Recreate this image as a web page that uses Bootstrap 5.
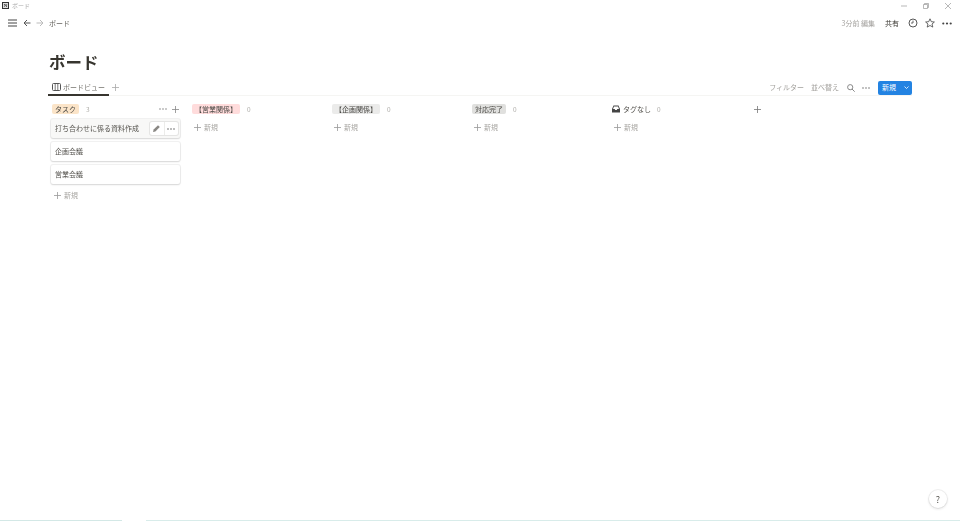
<!DOCTYPE html>
<html lang="ja"><head><meta charset="utf-8"><title>ボード</title>
<link href="https://cdn.jsdelivr.net/npm/bootstrap@5.3.0/dist/css/bootstrap.min.css" rel="stylesheet">
<style>
html,body{height:100%;overflow:hidden}
body{width:960px;height:521px;background:#fff;font-family:"Noto Sans CJK JP","Liberation Sans",sans-serif;color:#37352f;font-size:7px;line-height:1;position:relative;filter:blur(.3px)}
svg{display:block;flex:none}
.ttl{height:11px;padding-left:2px}
.ttl-name{color:#aaa;font-size:6px;margin-left:3px}
.logo{width:7px;height:7px;border:1px solid #333;background:#ddd;font:bold 5px/5px "Liberation Serif",serif;text-align:center;color:#222}
.winbtns{padding-right:9px;gap:16px}
.tbar{height:24px;padding:0 8px}
.crumb{color:#66645f;margin-left:5px}
.edited{color:#a5a3a0;font-size:7px}
.share{font-size:7px;color:#37352f;margin-left:10px}
.ttlwrap{padding:17px 0 0 49px;height:45px}
.pgtitle{font-size:16.5px;font-weight:700;line-height:20px;margin:0;color:#37352f}
.tabrow{margin:0 48px;height:15px}
.viewtab{width:61px;border-bottom:2px solid #37352f;padding-left:4px;gap:2px;color:#77756f;height:16px;margin-bottom:-1px}
.tabplus{margin-left:3px}
.act{color:#a3a19d}
.newbtn{background:#2383e2;color:#fff;border-radius:2px;height:14px;width:34px;margin-left:8px}
.newbtn span{width:22px;text-align:center}
.newbtn i{display:flex;flex:1;justify-content:center;align-items:center;height:100%}
.rule{height:1px;background:#f5f5f3;margin:0 48px}
.boardwrap{padding:6px 0 0 50px;gap:9px}
.bcol{width:131px}
.bhead{height:14px;margin-bottom:3px;padding-left:2px}
.tagx{padding:0 3px;height:10px;display:flex;align-items:center;border-radius:2px;color:#4a4945}
.t-or{background:#fbe4c8}.t-rd{background:#ffdcdc}.t-gy{background:#ebebea}.t-dg{background:#e0e0de}
.cnt{color:#b0aeaa;font-size:6.5px;margin-left:7px}
.hicons{margin-left:auto;gap:5px;margin-right:2px}
.tcard{height:19.5px;margin:0 1px 3px;border-radius:2px;background:#fff;box-shadow:0 0 0 1px rgba(15,15,15,.06),0 1px 2px rgba(15,15,15,.12);padding:0 4px;color:#55534e;position:relative}
.tcard.hov{height:18.5px;background:#f8f8f7;margin-bottom:4px}
.tcard:nth-child(3){margin-bottom:3.5px}
.tools{position:absolute;right:2px;top:3px;height:13px;width:28px;background:#fff;border-radius:2px;box-shadow:0 0 0 1px rgba(15,15,15,.08)}
.tools div{flex:1;display:flex;align-items:center;justify-content:center;height:100%}
.tools div+div{border-left:1px solid #ececea}
.addnew{height:16px;color:#a8a6a2;padding-left:4px;gap:3px}
.help{position:absolute;right:13px;bottom:13px;width:18px;height:18px;border-radius:50%;background:#fff;box-shadow:0 0 0 1px rgba(15,15,15,.06),0 1px 3px rgba(15,15,15,.12);font-size:9px;color:#55534e;display:flex;align-items:center;justify-content:center}
.foot{position:absolute;left:0;right:0;bottom:0;height:1px;background:linear-gradient(90deg,#d3e8e6 0,#d3e8e6 122px,#fff 122px,#fff 146px,#d8ecea 146px,#d8ecea 100%)}
</style></head>
<body>
<div class="ttl d-flex align-items-center">
  <div class="logo">N</div><span class="ttl-name">ボード</span>
  <div class="winbtns d-flex align-items-center ms-auto">
    <svg width="6" height="6" viewBox="0 0 6 6"><path d="M0 3h6" stroke="#999" fill="none" stroke-width=".7"/></svg>
    <svg width="6" height="6" viewBox="0 0 6 6"><path d="M.5 1.5h4v4h-4zM1.5 1.5V.5h4v4h-1" stroke="#999" fill="none" stroke-width=".7"/></svg>
    <svg width="6" height="6" viewBox="0 0 6 6"><path d="M0 0l6 6M6 0L0 6" stroke="#999" fill="none" stroke-width=".7"/></svg>
  </div>
</div>
<div class="tbar d-flex align-items-center">
  <svg width="9" height="8" viewBox="0 0 9 8"><path d="M0 1h9M0 4h9M0 7h9" stroke="#444" stroke-width="1" fill="none"/></svg>
  <svg style="margin-left:6px" width="8" height="8" viewBox="0 0 8 8"><path d="M7.5 4H1M4 1L1 4l3 3" stroke="#555" fill="none" stroke-width="1"/></svg>
  <svg style="margin-left:5px" width="8" height="8" viewBox="0 0 8 8"><path d="M.5 4H7M4 1l3 3-3 3" stroke="#bbb" fill="none" stroke-width="1"/></svg>
  <span class="crumb">ボード</span>
  <span class="edited ms-auto">3分前 編集</span>
  <span class="share">共有</span>
  <svg style="margin-left:9px" width="10" height="10" viewBox="0 0 10 10"><circle cx="5" cy="5" r="4" stroke="#444" fill="none" stroke-width=".9"/><path d="M5 2.6V5H3" stroke="#444" fill="none" stroke-width=".8"/></svg>
  <svg style="margin-left:7px" width="10" height="10" viewBox="0 0 10 10"><path d="M5 .8l1.3 2.9 3.1.3-2.4 2 .8 3.1L5 7.5 2.2 9.1 3 6 .6 4l3.1-.3z" stroke="#444" fill="none" stroke-width=".8"/></svg>
  <svg style="margin-left:7px" width="10" height="3" viewBox="0 0 10 3"><circle cx="1.3" cy="1.5" r="1.1" fill="#444"/><circle cx="5" cy="1.5" r="1.1" fill="#444"/><circle cx="8.7" cy="1.5" r="1.1" fill="#444"/></svg>
</div>
<div class="ttlwrap"><h1 class="pgtitle">ボード</h1></div>
<div class="tabrow d-flex align-items-center">
  <div class="viewtab d-flex align-items-center">
    <svg width="9" height="8" viewBox="0 0 9 8"><rect x=".5" y=".5" width="8" height="7" rx="1" stroke="#555" fill="none"/><path d="M3.2 .5v7M5.8 .5v7" stroke="#555" fill="none" stroke-width=".8"/></svg>
    <span>ボードビュー</span>
  </div>
  <svg class="tabplus" width="7" height="7" viewBox="0 0 7 7"><path d="M3.5 0v7M0 3.5h7" stroke="#aaa" fill="none" stroke-width=".8"/></svg>
  <span class="act ms-auto">フィルター</span>
  <span class="act" style="margin-left:7px">並べ替え</span>
  <svg style="margin-left:8px" width="8" height="8" viewBox="0 0 8 8"><circle cx="3.2" cy="3.2" r="2.6" stroke="#888" fill="none"/><path d="M5 5l2.7 2.7" stroke="#888" fill="none"/></svg>
  <svg style="margin-left:7px" width="8" height="2" viewBox="0 0 8 2"><circle cx="1" cy="1" r=".8" fill="#777"/><circle cx="4" cy="1" r=".8" fill="#777"/><circle cx="7" cy="1" r=".8" fill="#777"/></svg>
  <div class="newbtn d-flex align-items-center">
    <span>新規</span><i><svg width="5" height="3" viewBox="0 0 5 3"><path d="M.5.5l2 2 2-2" stroke="#fff" fill="none" stroke-width=".8"/></svg></i>
  </div>
</div>
<div class="rule"></div>
<div class="boardwrap d-flex">
  <div class="bcol">
    <div class="bhead d-flex align-items-center">
      <span class="tagx t-or">タスク</span><span class="cnt">3</span>
      <div class="hicons d-flex align-items-center">
        <svg width="8" height="2" viewBox="0 0 8 2"><circle cx="1" cy="1" r=".8" fill="#888"/><circle cx="4" cy="1" r=".8" fill="#888"/><circle cx="7" cy="1" r=".8" fill="#888"/></svg>
        <svg width="7" height="7" viewBox="0 0 7 7"><path d="M3.5 0v7M0 3.5h7" stroke="#888" fill="none" stroke-width=".8"/></svg>
      </div>
    </div>
    <div class="tcard hov d-flex align-items-center">打ち合わせに係る資料作成
      <div class="tools d-flex">
        <div><svg width="9" height="9" viewBox="0 0 9 9"><path d="M1 8l.6-2.4L6 1.2 7.8 3 3.4 7.4z" fill="#8a8884"/></svg></div>
        <div><svg width="8" height="2" viewBox="0 0 8 2"><circle cx="1" cy="1" r=".8" fill="#666"/><circle cx="4" cy="1" r=".8" fill="#666"/><circle cx="7" cy="1" r=".8" fill="#666"/></svg></div>
      </div>
    </div>
    <div class="tcard d-flex align-items-center">企画会議</div>
    <div class="tcard d-flex align-items-center">営業会議</div>
    <div class="addnew d-flex align-items-center"><svg width="7" height="7" viewBox="0 0 7 7"><path d="M3.5 0v7M0 3.5h7" stroke="#999" fill="none" stroke-width=".8"/></svg>新規</div>
  </div>
  <div class="bcol">
    <div class="bhead d-flex align-items-center"><span class="tagx t-rd">【営業関係】</span><span class="cnt">0</span></div>
    <div class="addnew d-flex align-items-center"><svg width="7" height="7" viewBox="0 0 7 7"><path d="M3.5 0v7M0 3.5h7" stroke="#999" fill="none" stroke-width=".8"/></svg>新規</div>
  </div>
  <div class="bcol">
    <div class="bhead d-flex align-items-center"><span class="tagx t-gy">【企画関係】</span><span class="cnt">0</span></div>
    <div class="addnew d-flex align-items-center"><svg width="7" height="7" viewBox="0 0 7 7"><path d="M3.5 0v7M0 3.5h7" stroke="#999" fill="none" stroke-width=".8"/></svg>新規</div>
  </div>
  <div class="bcol">
    <div class="bhead d-flex align-items-center"><span class="tagx t-dg">対応完了</span><span class="cnt">0</span></div>
    <div class="addnew d-flex align-items-center"><svg width="7" height="7" viewBox="0 0 7 7"><path d="M3.5 0v7M0 3.5h7" stroke="#999" fill="none" stroke-width=".8"/></svg>新規</div>
  </div>
  <div class="bcol">
    <div class="bhead d-flex align-items-center">
      <svg width="8" height="8" viewBox="0 0 8 8"><path d="M1.5.5h5L8 4v3.5H0V4z" fill="#444"/><path d="M2 1.5h4L7 4H5.3L4.8 5H3.2l-.5-1H1z" fill="#fff"/></svg>
      <span style="margin-left:3px;color:#55534e">タグなし</span><span class="cnt" style="margin-left:6px">0</span>
    </div>
    <div class="addnew d-flex align-items-center"><svg width="7" height="7" viewBox="0 0 7 7"><path d="M3.5 0v7M0 3.5h7" stroke="#999" fill="none" stroke-width=".8"/></svg>新規</div>
  </div>
  <div class="bhead d-flex align-items-center" style="margin-left:4px;padding-left:0"><svg width="7" height="7" viewBox="0 0 7 7"><path d="M3.5 0v7M0 3.5h7" stroke="#777" fill="none" stroke-width=".8"/></svg></div>
</div>
<div class="help">?</div>
<div class="foot"></div>
</body></html>
